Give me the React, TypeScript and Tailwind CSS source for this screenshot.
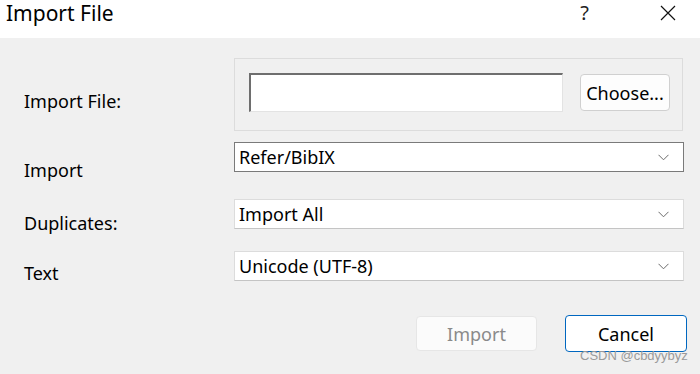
const font = { fontFamily: '"Noto Sans", "Open Sans", sans-serif' };

function Chevron() {
  return (
    <svg width="11" height="7" viewBox="0 0 11 7" className="shrink-0">
      <path d="M0.5 0.8 L5.5 5.8 L10.5 0.8" fill="none" stroke="#6b6b6b" strokeWidth="1" />
    </svg>
  );
}

function Combo({ value, focused }: { value: string; focused?: boolean }) {
  return (
    <div
      className={
        "w-[450px] h-[30px] bg-white flex items-center justify-between pl-[4px] pr-[14px] text-[18px] text-black " +
        (focused ? "border border-[#7a7a7a]" : "border border-[#dcdcdc] border-b-[#c4c4c4]")
      }
    >
      <span className="leading-[24px]">{value}</span>
      <Chevron />
    </div>
  );
}

export default function App() {
  return (
    <div className="w-[700px] h-[374px] flex flex-col bg-[#f0f0f0] text-black overflow-hidden" style={font}>
      {/* Title bar */}
      <div className="h-[38px] bg-white flex items-start shrink-0">
        <span className="ml-[6px] mt-[-1px] text-[21px] leading-[28px]">Import File</span>
        <span className="ml-auto mr-[71px] mt-[0px] text-[20px] leading-[26px] text-[#222]">?</span>
        <svg width="16" height="16" viewBox="0 0 16 16" className="mr-[24px] mt-[5px]">
          <path d="M1 1 L15 15 M15 1 L1 15" stroke="#111" strokeWidth="1.2" />
        </svg>
      </div>

      {/* Body */}
      <div className="flex-1 relative pt-[20px] pl-[24px]">
        <div className="flex">
          <div className="w-[210px] pt-[31px] text-[18px] leading-[24px]">Import File:</div>
          <div className="w-[449px] h-[73px] border border-[#dcdcdc] flex items-start pt-[14px] pl-[14px]">
            <div className="w-[314px] h-[39px] bg-white border-t-2 border-l-2 border-[#6e6e6e] border-r border-b border-r-[#e3e3e3] border-b-[#e3e3e3]" />
            <button className="ml-[17px] mt-[1px] w-[90px] h-[37px] rounded-[4px] border border-[#d0d0d0] bg-[#fdfdfd] text-[18px] leading-[24px]">
              Choose...
            </button>
          </div>
        </div>

        <div className="flex h-[30px] mt-[11px]">
          <div className="w-[210px] pt-[16px] text-[18px] leading-[24px]">Import</div>
          <Combo value="Refer/BibIX" focused />
        </div>

        <div className="flex h-[30px] mt-[27px]">
          <div className="w-[210px] pt-[12px] text-[18px] leading-[24px]">Duplicates:</div>
          <Combo value="Import All" />
        </div>

        <div className="flex h-[30px] mt-[22px]">
          <div className="w-[210px] pt-[10px] text-[18px] leading-[24px]">Text</div>
          <Combo value="Unicode (UTF-8)" />
        </div>

        <div className="flex items-center mt-[34px] pl-[392px]">
          <button className="w-[121px] h-[35px] rounded-[4px] border border-[#e6e6e6] bg-[#fbfbfb] text-[18px] leading-[24px] text-[#8a8a8a]">
            Import
          </button>
          <button className="ml-[28px] w-[122px] h-[37px] rounded-[4px] border border-[#0067c0] bg-white text-[18px] leading-[24px] text-black">
            Cancel
          </button>
        </div>

        <span className="absolute left-[580px] top-[310px] text-[13px] leading-[16px] text-[#9a9a9a]" style={{ fontFamily: '"Liberation Sans", Arial, sans-serif' }}>
          CSDN @cbdyybyz
        </span>
      </div>
    </div>
  );
}
